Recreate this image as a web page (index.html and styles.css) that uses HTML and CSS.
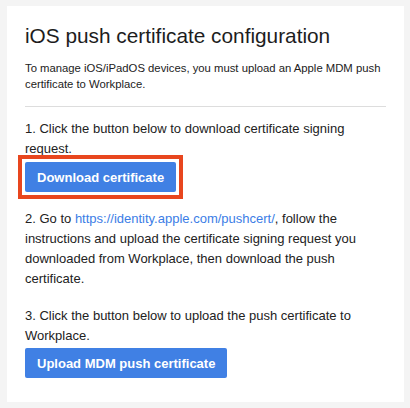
FILE: index.html
```html
<!DOCTYPE html>
<html>
<head>
<meta charset="utf-8">
<link rel="stylesheet" href="styles.css">
</head>
<body>
<div class="card">
  <h1 class="title">iOS push certificate configuration</h1>
  <p class="desc">To manage iOS/iPadOS devices, you must upload an Apple MDM push certificate to Workplace.</p>
  <hr class="sep">
  <div class="step step1">
    <p class="step-text">1. Click the button below to download certificate signing request.</p>
    <div class="highlight"><button class="btn">Download certificate</button></div>
  </div>
  <div class="step step2">
    <p class="step-text">2. Go to <a class="link" href="#">https://identity.apple.com/pushcert/</a>, follow the instructions and upload the certificate signing request you downloaded from Workplace, then download the push certificate.</p>
  </div>
  <div class="step step3">
    <p class="step-text">3. Click the button below to upload the push certificate to Workplace.</p>
    <button class="btn btn-upload">Upload MDM push certificate</button>
  </div>
</div>
</body>
</html>
```

FILE: styles.css
```css
html, body {
  margin: 0;
  padding: 0;
}
body {
  background: #f4f4f4;
  padding: 6px 6px 6px 7px;
  font-family: "Liberation Sans", Arial, sans-serif;
  color: #222;
}
.card {
  background: #fff;
  width: 397px;
  height: 396px;
  box-sizing: border-box;
  padding: 18px 18px 0 18px;
}
.title {
  margin: 0;
  font-size: 20.8px;
  line-height: 24px;
  font-weight: normal;
  color: #1d1d1d;
}
.desc {
  margin: 12px 0 0 0;
  font-size: 11.3px;
  line-height: 16px;
  color: #222;
}
.sep {
  margin: 14px 0 0 0;
  border: 0;
  border-top: 1px solid #ddd;
  height: 0;
}
.step {
  display: flex;
  flex-direction: column;
  align-items: flex-start;
}
.step1 { margin-top: 12px; }
.step2 { margin-top: 10px; }
.step3 { margin-top: 17px; }
.step-text {
  margin: 0;
  font-size: 13px;
  line-height: 20px;
  color: #222;
}
.link {
  color: #3b7de6;
  text-decoration: none;
}
.highlight {
  display: flex;
  margin: -4px 0 0 -7px;
  border: 4px solid #e8461e;
  padding: 3px;
}
.btn {
  display: block;
  height: 30px;
  padding: 0 12px;
  border: 0;
  border-radius: 2px;
  background: #4080e4;
  color: #fff;
  font-family: "Liberation Sans", Arial, sans-serif;
  font-weight: bold;
  font-size: 13px;
}
.btn-upload { margin-top: 2px; }
```
